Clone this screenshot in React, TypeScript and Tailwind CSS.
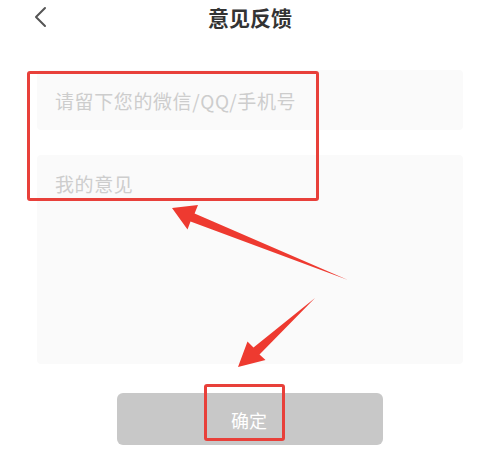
import React from "react";

export default function App() {
  return (
    <div
      className="relative w-[500px] h-[472px] bg-white overflow-hidden"
      style={{ fontFamily: '"Noto Sans CJK SC", "Noto Sans", sans-serif' }}
    >
      {/* header */}
      <div className="relative h-[36px] flex items-center justify-center">
        <svg
          className="absolute left-[32px] top-[6px]"
          width="18"
          height="22"
          viewBox="0 0 18 22"
          fill="none"
        >
          <path d="M13 2 L4 11 L13 20" stroke="#555" strokeWidth="2" strokeLinecap="round" strokeLinejoin="round" />
        </svg>
        <span className="text-[21px] font-bold text-[#333] leading-none -mt-[2px]">意见反馈</span>
      </div>

      {/* form */}
      <div className="flex flex-col px-[37px] pt-[34px] gap-[25px]">
        <div className="h-[60px] bg-[#fafafa] rounded-[4px] flex items-center pl-[18px]">
          <span className="text-[19px] tracking-[0.6px] text-[#cdcdcd] leading-none">请留下您的微信/QQ/手机号</span>
        </div>
        <div className="h-[209px] bg-[#fafafa] rounded-[4px] pl-[18px] pt-[18px]">
          <span className="text-[19px] tracking-[0.6px] text-[#cdcdcd] leading-none">我的意见</span>
        </div>
      </div>

      <div className="flex justify-center pt-[29px]">
        <div className="w-[266px] h-[52px] bg-[#c8c8c8] rounded-[6px] flex items-center justify-center">
          <span className="text-[18px] text-white leading-none ml-[-2px] mt-[2px]">确定</span>
        </div>
      </div>

      {/* annotations */}
      <div className="absolute left-[27px] top-[71px] w-[292px] h-[130px] border-[3px] border-[#e8403a] rounded-[3px]" />
      <div className="absolute left-[204px] top-[384px] w-[81px] h-[57px] border-[3px] border-[#e8403a] rounded-[3px]" />
      <svg className="absolute left-0 top-0" width="500" height="472" viewBox="0 0 500 472">
        <polygon
          points="172,208 198,205 194.6,213.5 348,280 190.5,221.5 187.5,229.5"
          fill="#ee3a30"
        />
        <polygon
          points="238,367 247.5,341.5 253.5,347.5 315,298 259.5,354.5 265.5,360"
          fill="#ee3a30"
        />
      </svg>
    </div>
  );
}
